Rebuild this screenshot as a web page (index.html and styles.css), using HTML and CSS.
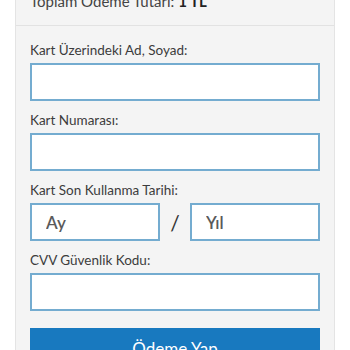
FILE: index.html
```html
<!DOCTYPE html>
<html lang="tr">
<head>
<meta charset="utf-8">
<link rel="stylesheet" href="styles.css">
</head>
<body>
<div class="panel">
  <div class="total">Toplam Ödeme Tutarı: <b>1 TL</b></div>
  <form class="form">
    <label class="label">Kart Üzerindeki Ad, Soyad:</label>
    <input class="field" type="text">
    <label class="label">Kart Numarası:</label>
    <input class="field" type="text">
    <label class="label">Kart Son Kullanma Tarihi:</label>
    <div class="date-row">
      <input class="field date" type="text" placeholder="Ay">
      <span class="slash">/</span>
      <input class="field date" type="text" placeholder="Yıl">
    </div>
    <label class="label">CVV Güvenlik Kodu:</label>
    <input class="field" type="text">
    <button class="pay" type="button">Ödeme Yap</button>
  </form>
</div>
</body>
</html>
```
FILE: styles.css
```css
html, body {
  margin: 0;
  padding: 0;
  background: #ffffff;
  font-family: Lato, "Open Sans", "Liberation Sans", sans-serif;
  color: #444;
}
.panel {
  margin: -10px 15px 0 15px;
  background: #f4f4f4;
  border: 1px solid #e4e4e4;
  box-sizing: border-box;
}
.total {
  font-size: 15px;
  line-height: 20px;
  padding: 0 14px 14px 14px;
  border-bottom: 1px solid #e2e2e2;
  color: #444;
}
.total b {
  font-weight: 700;
  color: #222;
}
.form {
  display: flex;
  flex-direction: column;
  padding: 15px 14px 20px 14px;
}
.label {
  font-size: 13.5px;
  line-height: 18px;
  color: #3c3c3c;
  margin: 0 0 4px 0;
}
.field {
  box-sizing: border-box;
  height: 38px;
  width: 100%;
  border: 2px solid #74acd0;
  background: #fff;
  margin: 0 0 10px 0;
  outline: none;
  font-family: inherit;
}
.date-row {
  display: flex;
  align-items: center;
  margin-bottom: 10px;
}
.date-row .field {
  margin: 0;
  flex: 1;
  min-width: 0;
  padding: 0 14px;
  font-size: 17px;
  font-weight: 600;
}
.date::placeholder {
  color: #5a5a5a;
}
.slash {
  width: 30px;
  text-align: center;
  font-size: 21px;
  color: #333;
}
.pay {
  margin-top: 7px;
  height: 40px;
  background: #1879bf;
  color: #fff;
  border: none;
  font-family: inherit;
  font-size: 17px;
  padding-top: 2px;
}
```
